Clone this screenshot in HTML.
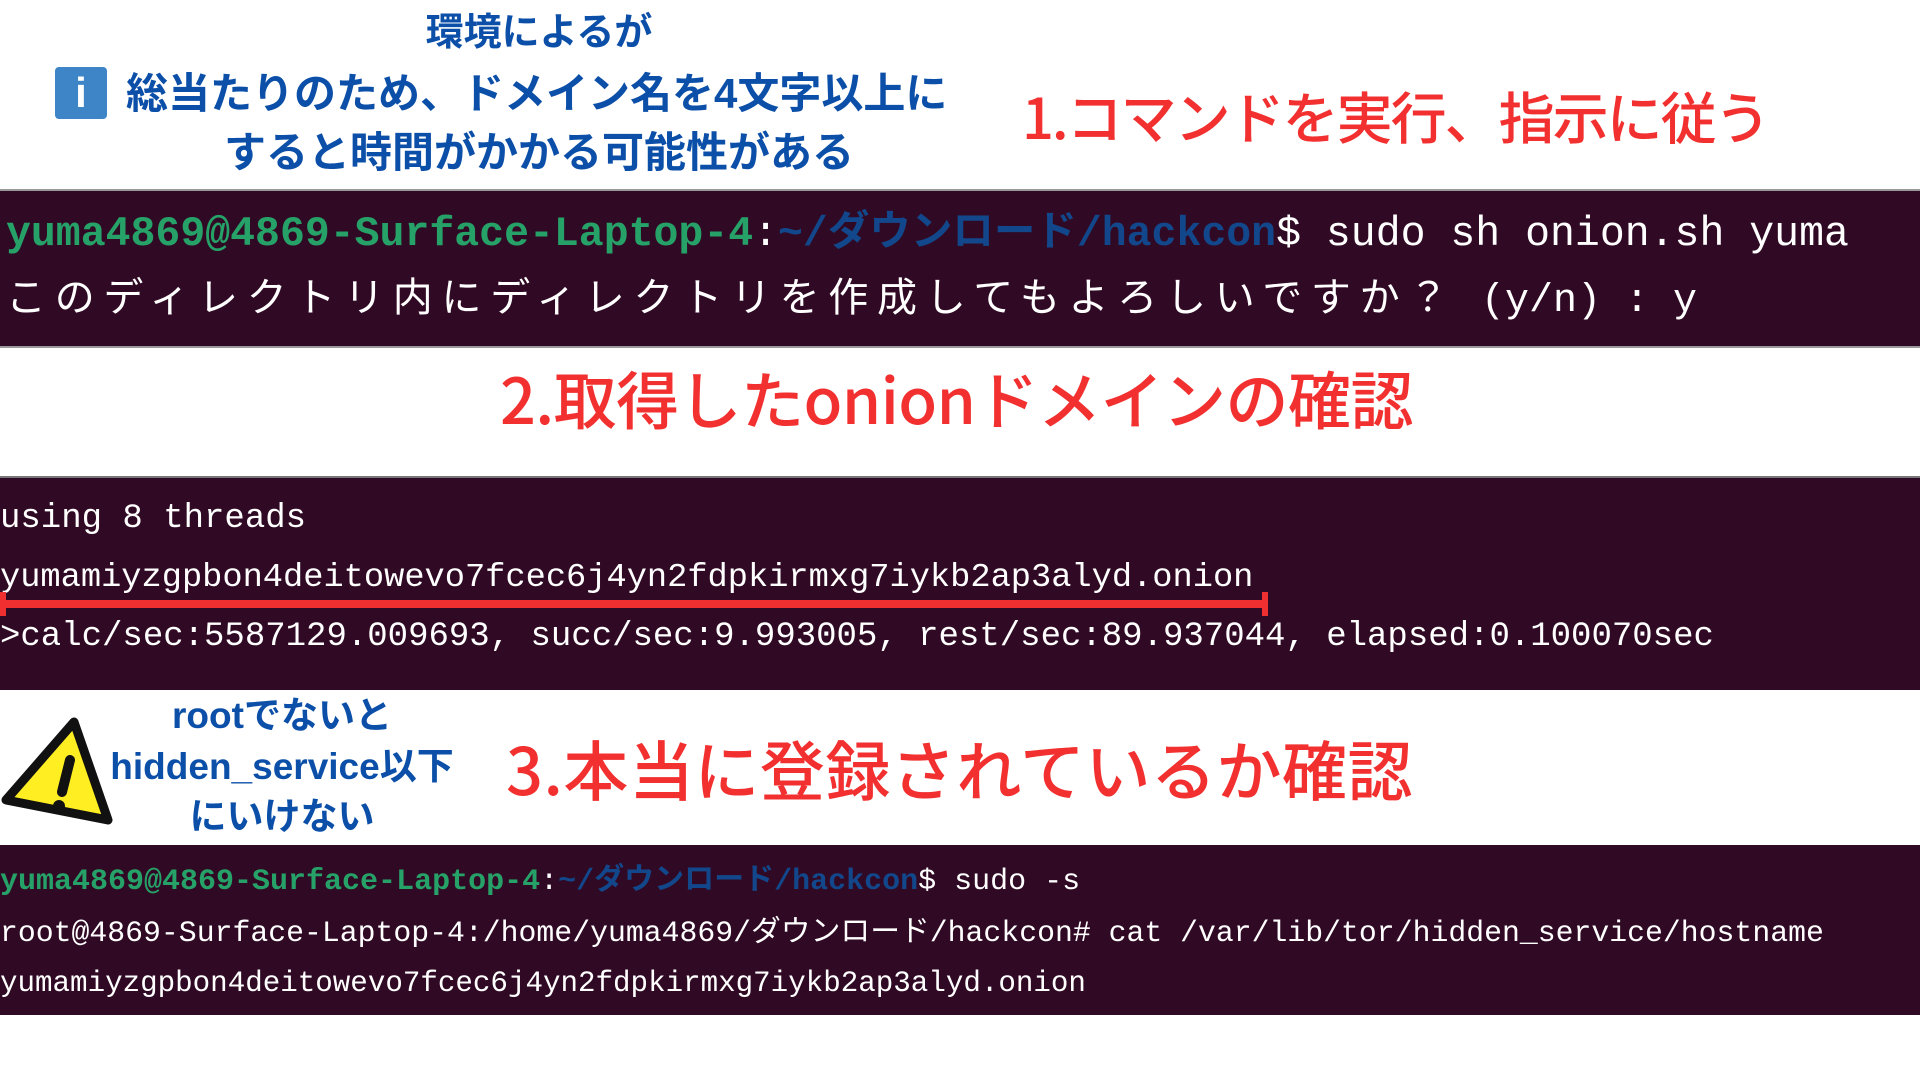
<!DOCTYPE html>
<html><head><meta charset="utf-8"><style>
body{margin:0;width:1920px;height:1080px;background:#fff;position:relative;overflow:hidden;font-family:"Liberation Sans","Noto Sans CJK JP",sans-serif}
.a{position:absolute;white-space:nowrap}
.term{position:absolute;left:0;width:1920px;background:#300a24}
.mono{font-family:"Liberation Mono","Noto Sans CJK JP",monospace;color:#fff}
.g{color:#26a269;font-weight:bold}.b{color:#12488b;font-weight:bold}
.blue{color:#0b4fa8;font-weight:bold}
.red{color:#f23030;font-family:"Noto Sans CJK JP",sans-serif;font-weight:500}
.c{transform:translateX(-50%);text-align:center}
</style></head><body>
<div class="a blue c" style="left:539px;top:10px;font-size:38px;line-height:46px">環境によるが</div>
<div class="a" style="left:55px;top:67px;width:52px;height:52px;background:#3d85c6;border-radius:4px;color:#fff;font-size:42px;font-weight:bold;text-align:center;line-height:52px">i</div>
<div class="a blue" style="left:126px;top:69px;font-size:42px;line-height:50px;letter-spacing:0px">総当たりのため、ドメイン名を4文字以上に</div>
<div class="a blue c" style="left:539px;top:128px;font-size:42px;line-height:50px">すると時間がかかる可能性がある</div>
<div class="a red" style="left:1022px;top:82px;font-size:56px;line-height:68px;letter-spacing:-2px">1.コマンドを実行、指示に従う</div>

<div class="term" style="top:189px;height:155px;border-top:2px solid #999;border-bottom:2px solid #999"></div>
<div class="a mono" style="left:6px;top:210px;font-size:41.5px;line-height:50px"><span class="g">yuma4869@4869-Surface-Laptop-4</span>:<span class="b">~/ダウンロード/hackcon</span>$ sudo sh onion.sh yuma</div>
<div class="a mono" style="left:6px;top:278px;font-size:40px;line-height:48px"><span style="letter-spacing:8.7px">このディレクトリ内にディレクトリを作成してもよろしいですか？</span> (y/n) : y</div>

<div class="a red" style="left:500px;top:360px;font-size:63px;line-height:76px;letter-spacing:-0.5px">2.取得したonionドメインの確認</div>

<div class="term" style="top:476px;height:212px;border-top:2px solid #777;overflow:hidden"></div>
<div class="a mono" style="left:0;top:498px;font-size:34px;line-height:42px">using 8 threads</div>
<div class="a mono" style="left:0;top:557px;font-size:33.7px;line-height:42px">yumamiyzgpbon4deitowevo7fcec6j4yn2fdpkirmxg7iykb2ap3alyd.onion</div>
<div class="a" style="left:2px;top:600px;width:1265px;height:8px;background:#f03030"></div>
<div class="a" style="left:0;top:592px;width:6px;height:24px;background:#f03030"></div>
<div class="a" style="left:1262px;top:592px;width:6px;height:24px;background:#f03030"></div>
<div class="a mono" style="left:0;top:616px;font-size:34px;line-height:42px">&gt;calc/sec:5587129.009693, succ/sec:9.993005, rest/sec:89.937044, elapsed:0.100070sec</div>

<svg class="a" style="left:0;top:712px" width="115" height="118" viewBox="0 0 115 118"><path d="M74 10 L108 108 L6 88 Z" fill="#ffee22" stroke="#111" stroke-width="9" stroke-linejoin="round"/><path d="M70 48 L62 80" stroke="#111" stroke-width="10" stroke-linecap="round"/><circle cx="59" cy="94" r="6" fill="#111"/></svg>
<div class="a blue c" style="left:282px;top:694px;font-size:37px;line-height:44px">rootでないと</div>
<div class="a blue c" style="left:282px;top:745px;font-size:37px;line-height:44px">hidden_service以下</div>
<div class="a blue c" style="left:282px;top:795px;font-size:37px;line-height:44px">にいけない</div>
<div class="a red" style="left:506px;top:727px;font-size:65px;line-height:80px;letter-spacing:0.5px">3.本当に登録されているか確認</div>

<div class="term" style="top:845px;height:170px"></div>
<div class="a mono" style="left:0;top:864px;font-size:30px;line-height:36px"><span class="g">yuma4869@4869-Surface-Laptop-4</span>:<span class="b">~/ダウンロード/hackcon</span>$ sudo -s</div>
<div class="a mono" style="left:0;top:915px;font-size:29.8px;line-height:36px">root@4869-Surface-Laptop-4:/home/yuma4869/ダウンロード/hackcon# cat /var/lib/tor/hidden_service/hostname</div>
<div class="a mono" style="left:0;top:966px;font-size:29.2px;line-height:36px">yumamiyzgpbon4deitowevo7fcec6j4yn2fdpkirmxg7iykb2ap3alyd.onion</div>
</body></html>
